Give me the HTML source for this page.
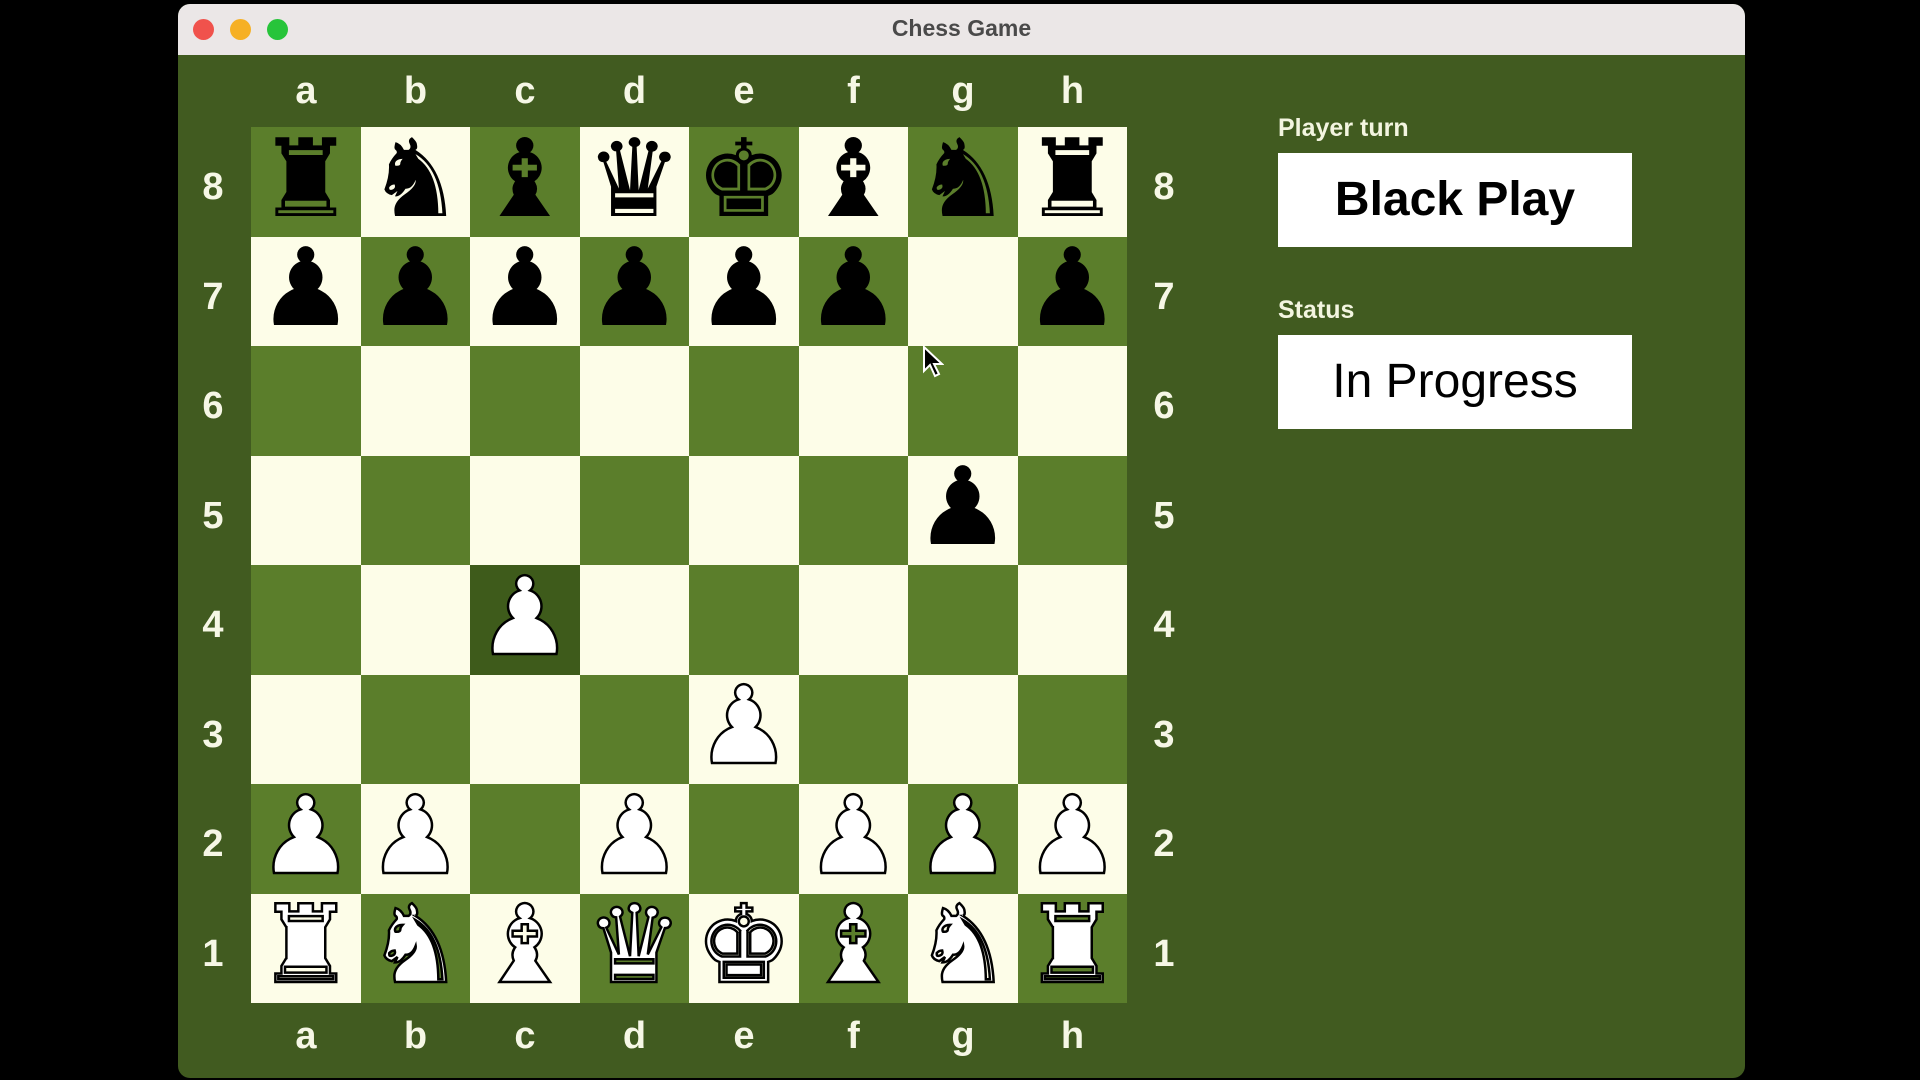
<!DOCTYPE html>
<html><head><meta charset="utf-8"><style>
body{margin:0;width:1920px;height:1080px;background:#000;position:relative;overflow:hidden;font-family:"Liberation Sans",Arial,sans-serif}
.win{position:absolute;left:178px;top:4px;width:1567px;height:1074px;background:#415b20;border-radius:12px;overflow:hidden}
.tb{position:absolute;left:0;top:0;right:0;height:51px;background:#ebe7e7;text-align:center;line-height:48px;font-weight:bold;font-size:23px;color:#4a4a4a}
.dot{position:absolute;top:15px;width:21px;height:21px;border-radius:50%}
.board{position:absolute;left:73px;top:123px;width:876px;height:876px;display:grid;grid-template-columns:repeat(8,109.5px);grid-template-rows:repeat(8,109.5px)}
.sq{display:flex;align-items:center;justify-content:center;font-family:"DejaVu Sans",sans-serif;font-size:108px;line-height:1;overflow:hidden}
.sq span{position:relative;top:-2px}
.d{background:#5b7e2b}.l{background:#fdfde8}.h{background:#3e5b1b}
.b{color:#000}.w{color:#fff;-webkit-text-stroke:2.5px #000}
.lab{position:absolute;color:#f6f7e6;font-weight:bold;font-size:38px;text-align:center;width:110px}
.rk{position:absolute;color:#f6f7e6;font-weight:bold;font-size:38px;width:40px;text-align:center}
.pl{position:absolute;left:1100px;color:#f3f5e0;font-weight:bold;font-size:25px}
.box{position:absolute;left:1100px;width:354px;height:94px;background:#fff;text-align:center;line-height:94px;font-size:48px;color:#000}
</style></head><body>
<div class="win">
<div class="tb">Chess Game
<div class="dot" style="left:15px;background:#f0524c"></div>
<div class="dot" style="left:52px;background:#f6b024"></div>
<div class="dot" style="left:89px;background:#27c43a"></div>
</div>
<div class="board" id="bd"></div>
<div class="pl" style="top:110px">Player turn</div>
<div class="box" style="top:149px;font-weight:bold">Black Play</div>
<div class="pl" style="top:292px">Status</div>
<div class="box" style="top:331px">In Progress</div>
<svg style="position:absolute;left:744px;top:341px" width="22" height="34" viewBox="0 0 22 34"><path d="M2 2 L2 26 L8 20 L13 31 L17 29 L12 19 L20 19 Z" fill="#000" stroke="#fff" stroke-width="2"/></svg>
</div>
<script>
var W=document.querySelector('.win');
var f='abcdefgh';
for(var i=0;i<8;i++){
 ['66','1011'].forEach(function(t){var e=document.createElement('div');e.className='lab';e.style.left=(73+i*109.5)+'px';e.style.top=t+'px';e.textContent=f[i];W.appendChild(e);});
 [15,966].forEach(function(x){var e=document.createElement('div');e.className='rk';e.style.left=x+'px';e.style.top=(123+i*109.5+39)+'px';e.textContent=8-i;W.appendChild(e);});
}
var pos=["rnbqkbnr","pppppp.p","........","......p.","..P.....","....P...","PP.P.PPP","RNBQKBNR"];
var m={r:'♜',n:'♞',b:'♝',q:'♛',k:'♚',p:'♟'};
var bd=document.getElementById('bd');
for(var r=0;r<8;r++)for(var c=0;c<8;c++){
 var s=document.createElement('div');
 var cls=(r+c)%2==0?'d':'l';if(r==4&&c==2)cls='h';
 s.className='sq '+cls;var p=pos[r][c];
 if(p!='.'){var sp=document.createElement('span');var lo=p.toLowerCase();sp.className=(p==lo)?'b':'w';sp.textContent=m[lo];s.appendChild(sp);}
 bd.appendChild(s);
}
</script>
</body></html>
